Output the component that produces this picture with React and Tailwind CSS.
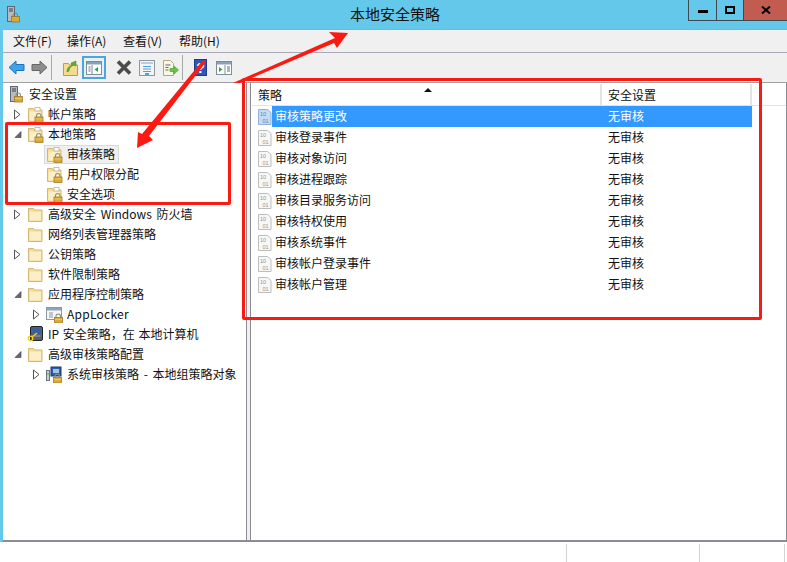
import React from "react";

const font = { fontFamily: '"Noto Sans CJK SC", "Noto Sans", sans-serif' };

const Lock = ({ x = 8, y = 8 }) => (
  <g transform={`translate(${x} ${y})`}>
    <path d="M2 3.5V2.4C2 .8 3 0 4.2 0S6.5.8 6.5 2.4V3.5" fill="none" stroke="#8f8f78" strokeWidth="1.1" />
    <rect x="0.5" y="3.5" width="8" height="5.5" fill="#d9a93a" stroke="#a47c22" strokeWidth="0.8" />
    <path d="M1 5.5h7" stroke="#f0cf70" strokeWidth="0.8" />
  </g>
);

const Folder = ({ lock }) => (
  <svg width="17" height="17" viewBox="0 0 17 17" className="shrink-0">
    <path d="M1.5 2.5h5l1 1.5h7.5v11.5h-13.500z" fill="#f6dc90" stroke="#d2b878" strokeWidth="1" />
    <path d="M2.500 5.500h11.500v9h-11.500z" fill="#fcefc8" />
    {lock && <rect x="8" y="1.500" width="5" height="3.500" fill="#fff" stroke="#bfa878" strokeWidth="0.7" />}
    {lock && <Lock x={7.500} y={7.500} />}
  </svg>
);

const Server = () => (
  <svg width="17" height="17" viewBox="0 0 17 17" className="shrink-0">
    <rect x="0.500" y="0.500" width="7" height="15" fill="#b7bcc4" stroke="#5d6672" />
    <path d="M2 3h4M2 5h4" stroke="#39424e" strokeWidth="1" />
    <Lock x={4} y={7} />
  </svg>
);

const AppIcon = () => (
  <svg width="17" height="17" viewBox="0 0 17 17" className="shrink-0">
    <rect x="0.500" y="1.500" width="15" height="12" fill="#f4f6f8" stroke="#8b97a3" />
    <rect x="1" y="2" width="14" height="2.500" fill="#8fa5b8" />
    <path d="M3 7h4M3 9h4M3 11h4" stroke="#8b97a3" />
    <Lock x={8} y={8} />
  </svg>
);

const IpIcon = () => (
  <svg width="17" height="17" viewBox="0 0 17 17" className="shrink-0">
    <rect x="3.500" y="0.500" width="12" height="14" rx="1.500" fill="#5a606a" stroke="#20242b" />
    <rect x="5.500" y="2.500" width="8" height="5" fill="#2f5fb0" />
    <path d="M5.500 10h8" stroke="#9aa0a8" />
    <circle cx="3.500" cy="12.500" r="2.300" fill="none" stroke="#f2d020" strokeWidth="1.300" />
    <path d="M5 11 10 7" stroke="#f2d020" strokeWidth="1.500" />
  </svg>
);

const GpoIcon = () => (
  <svg width="17" height="17" viewBox="0 0 17 17" className="shrink-0">
    <rect x="0.500" y="4.500" width="3" height="10" fill="#c9ced6" stroke="#6b7480" />
    <path d="M2 7v2" stroke="#35c040" />
    <rect x="5" y="1" width="10" height="9" fill="#2f5fa8" stroke="#1d3768" />
    <rect x="7" y="3" width="6" height="4" fill="#9fc4ea" />
    <Lock x={7} y={8} />
  </svg>
);

const Policy = ({ selected }) => (
  <svg width="14" height="16" viewBox="0 0 14 16" className="shrink-0">
    <path d="M.5.500h9l3.500 3v12h-12.500z" fill={selected ? "#c4dbf5" : "#f7f7f7"} stroke={selected ? "#8fb2dd" : "#bdbdbd"} />
    <text x="2" y="7" fontSize="5.500" fill={selected ? "#5a86c0" : "#939393"} fontFamily="Liberation Sans, sans-serif">10</text>
    <text x="4.500" y="13.500" fontSize="5.500" fill={selected ? "#5a86c0" : "#939393"} fontFamily="Liberation Sans, sans-serif">01</text>
  </svg>
);

const Caret = ({ open }) => (
  <svg width="9" height="11" viewBox="0 0 9 11" className="shrink-0">
    {open ? <path d="M8 2.500v6H2z" fill="#6a6a6a" stroke="#3a3a3a" strokeWidth="0.600" /> : <path d="M1.500 1 7 5.500 1.500 10z" fill="#fff" stroke="#555" />}
  </svg>
);

const TreeRow = ({ pad, caret, icon, text, selected, noCaret, cls = "" }) => (
  <div className={`flex h-5 items-center ${pad}`}>
    {!noCaret && <div className="flex w-[14px] shrink-0 justify-start">{caret && <Caret open={caret === "open"} />}</div>}
    <div className={`flex items-center ${noCaret ? "gap-[2px]" : "gap-[4px]"} ${selected ? "-my-px -ml-[2px] h-[19px] border border-[#d9d9d9] bg-[#f0f0f0] pl-px pr-[3px]" : ""}`}>
      {icon}
      <span className={`whitespace-nowrap text-[12px] leading-none text-[#111] ${cls}`}>{text}</span>
    </div>
  </div>
);

const listRows = ["审核策略更改", "审核登录事件", "审核对象访问", "审核进程跟踪", "审核目录服务访问", "审核特权使用", "审核系统事件", "审核帐户登录事件", "审核帐户管理"];

const ToolSep = ({ cls }) => <div className={`h-[25px] w-px bg-[#a9a9a9] ${cls}`} />;

export default function App() {
  return (
    <div className="relative flex h-[562px] w-[787px] flex-col overflow-hidden bg-[#63c8ea]" style={font}>
      {/* Title bar */}
      <div className="relative flex h-[29px] shrink-0 items-start justify-center">
        <div className="absolute left-[7px] top-[6px]">
          <svg width="14" height="17" viewBox="0 0 14 17">
            <rect x="0.500" y="0.500" width="7" height="15" fill="#b7bcc4" stroke="#5d6672" />
            <path d="M2 3h4M2 5h4" stroke="#39424e" />
            <g transform="translate(4 7)"><path d="M2 3.500V2.400C2 .8 3 0 4.200 0S6.500.8 6.500 2.400V3.500" fill="none" stroke="#8a7a40" /><rect x="0.500" y="3.500" width="8" height="5.500" fill="#d9a93a" stroke="#9a7420" strokeWidth="0.800" /></g>
          </svg>
        </div>
        <span className="mt-[3px] pl-[3px] text-[15px] leading-[22px] text-[#111]">本地安全策略</span>
        <div className="absolute right-0 top-0 flex h-[21px] border-b border-l border-[#3f4a50]">
          <div className="flex w-[28px] items-center justify-center border-r border-[#3f4a50]"><div className="mt-[3px] h-[3px] w-[10px] bg-black" /></div>
          <div className="flex w-[26px] items-center justify-center"><div className="h-[8px] w-[10px] border-2 border-black" /></div>
          <div className="flex w-[44px] items-center justify-center border-l border-[#3f4a50] bg-[#c25b50]">
            <svg width="10" height="8" viewBox="0 0 10 8"><path d="M1 .5 9 7.500M9 .5 1 7.500" stroke="#000" strokeWidth="2" /></svg>
          </div>
        </div>
      </div>

      {/* Window body */}
      <div className="ml-[3px] flex min-h-0 flex-1 flex-col border-t border-[#8fb0be] bg-[#f0f0f0]">
        {/* Menu */}
        <div className="flex h-[23px] shrink-0 items-center border-b border-[#a9a9b8] pb-px text-[12px] leading-none text-[#111]">
          <span className="ml-[10px] w-[54px]">文件(F)</span>
          <span className="w-[56px]">操作(A)</span>
          <span className="w-[56px]">查看(V)</span>
          <span>帮助(H)</span>
        </div>

        {/* Toolbar */}
        <div className="flex h-[30px] shrink-0 items-center border-b border-[#a0a0a0]">
          <svg className="ml-[5px]" width="17" height="15" viewBox="0 0 17 15"><path d="M1 7.500 8 1v3.500h8v6H8V14z" fill="#3ba3e8" stroke="#1c74c0" /></svg>
          <svg className="ml-[6px]" width="17" height="15" viewBox="0 0 17 15"><path d="M16 7.500 9 1v3.500H1v6h8V14z" fill="#8d8d8d" stroke="#666" /></svg>
          <ToolSep cls="ml-[3px]" />
          <svg className="ml-[11px]" width="15" height="16" viewBox="0 0 15 16"><path d="M.5 3.500h5l1 1.500h8v10.500H.5z" fill="#f4dc8e" stroke="#b69c54" /><path d="M4 12C4 8 6 6 9 5.500L8 3l5-2 0 5-2-1C8 6 6 8 6 11z" fill="#5cb030" stroke="#3a8420" strokeWidth="0.500" /></svg>
          <div className="ml-[4px] flex h-[23px] w-[24px] items-center justify-center border-2 border-[#4aa6dc] bg-[#e4f1fa]">
            <svg width="16" height="14" viewBox="0 0 16 14"><rect x=".5" y=".5" width="15" height="13" fill="#fff" stroke="#7f8c99" /><rect x="1" y="1" width="14" height="2.500" fill="#8aa0b4" /><path d="M6 4v9" stroke="#7f8c99" /><path d="M2.500 6h2M2.500 8h2M2.500 10h2" stroke="#5e6b78" /><path d="M12 6v5l-3.500-2.500z" fill="#25a745" /></svg>
          </div>
          <svg className="ml-[10px]" width="16" height="15" viewBox="0 0 16 15"><path d="M2 1.500 14 13.500M14 1.500 2 13.500" stroke="#4b4b4b" strokeWidth="3.600" /></svg>
          <svg className="ml-[7px]" width="16" height="16" viewBox="0 0 16 16"><rect x=".5" y=".5" width="15" height="15" fill="#f2f4f6" stroke="#8c97a2" /><rect x="2" y="2" width="12" height="2" fill="#c2ccd6" /><path d="M4 6.500h8M4 9h8M4 11.500h8" stroke="#4f9fd8" /><path d="M6 14h4" stroke="#4aa6dc" strokeWidth="2" /></svg>
          <svg className="ml-[7px]" width="17" height="16" viewBox="0 0 17 16"><path d="M1.500.5h7l3 3v12h-10z" fill="#fbf6e0" stroke="#b0a888" /><path d="M3.500 5h5M3.500 7.500h3M3.500 10h3" stroke="#5f6a74" /><path d="M8 8.500h4V6l4.500 4-4.500 4v-2.500H8z" fill="#6cc04a" stroke="#3d9a30" strokeWidth="0.600" /></svg>
          <ToolSep cls="ml-[3px]" />
          <div className="ml-[11px] flex h-[17px] w-[13px] items-center justify-center border border-[#1d3a90] bg-[#2f55b8]">
            <span className="text-[14px] font-bold leading-none text-white" style={{ fontFamily: '"Liberation Sans", sans-serif' }}>?</span>
          </div>
          <svg className="ml-[9px]" width="16" height="14" viewBox="0 0 16 14"><rect x=".5" y=".5" width="15" height="13" fill="#fff" stroke="#7f8c99" /><rect x="1" y="1" width="14" height="2.500" fill="#8aa0b4" /><path d="M9 4v9" stroke="#7f8c99" /><path d="M3 6v5l3.500-2.500z" fill="#25a745" /><path d="M11 6h3M11 8h3M11 10h3" stroke="#5e6b78" /></svg>
        </div>

        {/* Panels */}
        <div className="flex min-h-0 flex-1 border-b-2 border-[#8c8c94]">
          <div className="w-[244px] shrink-0 border-r border-[#8c8c94] bg-white pt-px">
            <TreeRow pad="pl-[7px]" noCaret icon={<Server />} text="安全设置" />
            <TreeRow pad="pl-[10px]" caret="closed" icon={<Folder lock />} text="帐户策略" />
            <TreeRow pad="pl-[10px]" caret="open" icon={<Folder lock />} text="本地策略" />
            <TreeRow pad="pl-[29px]" icon={<Folder lock />} text="审核策略" selected />
            <TreeRow pad="pl-[29px]" icon={<Folder lock />} text="用户权限分配" />
            <TreeRow pad="pl-[29px]" icon={<Folder lock />} text="安全选项" />
            <TreeRow pad="pl-[10px]" caret="closed" icon={<Folder />} text="高级安全 Windows 防火墙" cls="[word-spacing:2px]" />
            <TreeRow pad="pl-[10px]" icon={<Folder />} text="网络列表管理器策略" />
            <TreeRow pad="pl-[10px]" caret="closed" icon={<Folder />} text="公钥策略" />
            <TreeRow pad="pl-[10px]" icon={<Folder />} text="软件限制策略" />
            <TreeRow pad="pl-[10px]" caret="open" icon={<Folder />} text="应用程序控制策略" />
            <TreeRow pad="pl-[29px]" caret="closed" icon={<AppIcon />} text="AppLocker" cls="tracking-[0.25px]" />
            <TreeRow pad="pl-[10px]" icon={<IpIcon />} text="IP 安全策略，在 本地计算机" cls="[word-spacing:1px]" />
            <TreeRow pad="pl-[10px]" caret="open" icon={<Folder />} text="高级审核策略配置" />
            <TreeRow pad="pl-[29px]" caret="closed" icon={<GpoIcon />} text="系统审核策略 - 本地组策略对象" cls="[word-spacing:2px]" />
          </div>
          <div className="w-[3px] shrink-0" />
          <div className="min-w-0 flex-1 border-l border-r border-[#8c8c94] bg-white pl-px pt-px">
            <div className="flex h-[22px] border-b border-[#e2e2e2]">
              <div className="flex w-[350px] items-center border-r-2 border-[#e4e4e4] pl-[6px] text-[12px] leading-none text-[#111]">
                <span>策略</span>
                <svg className="mb-[10px] ml-[142px]" width="8" height="4" viewBox="0 0 8 4"><path d="M0 4 4 0l4 4z" fill="#111" /></svg>
              </div>
              <div className="flex w-[150px] items-center border-r-2 border-[#e4e4e4] pl-[6px] text-[12px] leading-none text-[#111]">安全设置</div>
            </div>
            {listRows.map((name, i) => (
              <div key={name} className="flex h-[21px] w-[500px] items-center">
                <div className="ml-[6px] flex w-[14px] shrink-0"><Policy selected={i === 0} /></div>
                <div className={`flex h-[21px] flex-1 items-center pb-[2px] text-[12px] leading-none ${i === 0 ? "bg-[#3399ff] text-white" : "text-[#111]"}`}>
                  <span className="w-[336px] pl-[3px]">{name}</span>
                  <span>无审核</span>
                </div>
              </div>
            ))}
          </div>
        </div>
      </div>

      {/* Status bar */}
      <div className="flex h-[20px] shrink-0 justify-end bg-white pr-px pt-[2px]">
        <div className="w-[133px] border-l border-[#d4d4d4]" />
        <div className="w-[85px] border-l border-[#d4d4d4]" />
        <div className="w-[2px] border-l border-[#d4d4d4]" />
      </div>

      {/* Red annotations */}
      <div className="absolute left-[5px] top-[122px] h-[83px] w-[226px] rounded-[2px] border-[3px] border-[#fb1a12]" />
      <div className="absolute left-[242px] top-[78px] h-[242px] w-[520px] rounded-[2px] border-[3px] border-[#fb1a12]" />
      <svg className="absolute left-0 top-0" width="787" height="562" viewBox="0 0 787 562">
        <polygon points="203,60 142,134 138,132 137,148 153,140 149,136 206,62" fill="#fb1a12" />
        <polygon points="233,83 335,38 329,32 348,33 337,48 334,43 240,83" fill="#fb1a12" />
      </svg>
    </div>
  );
}
